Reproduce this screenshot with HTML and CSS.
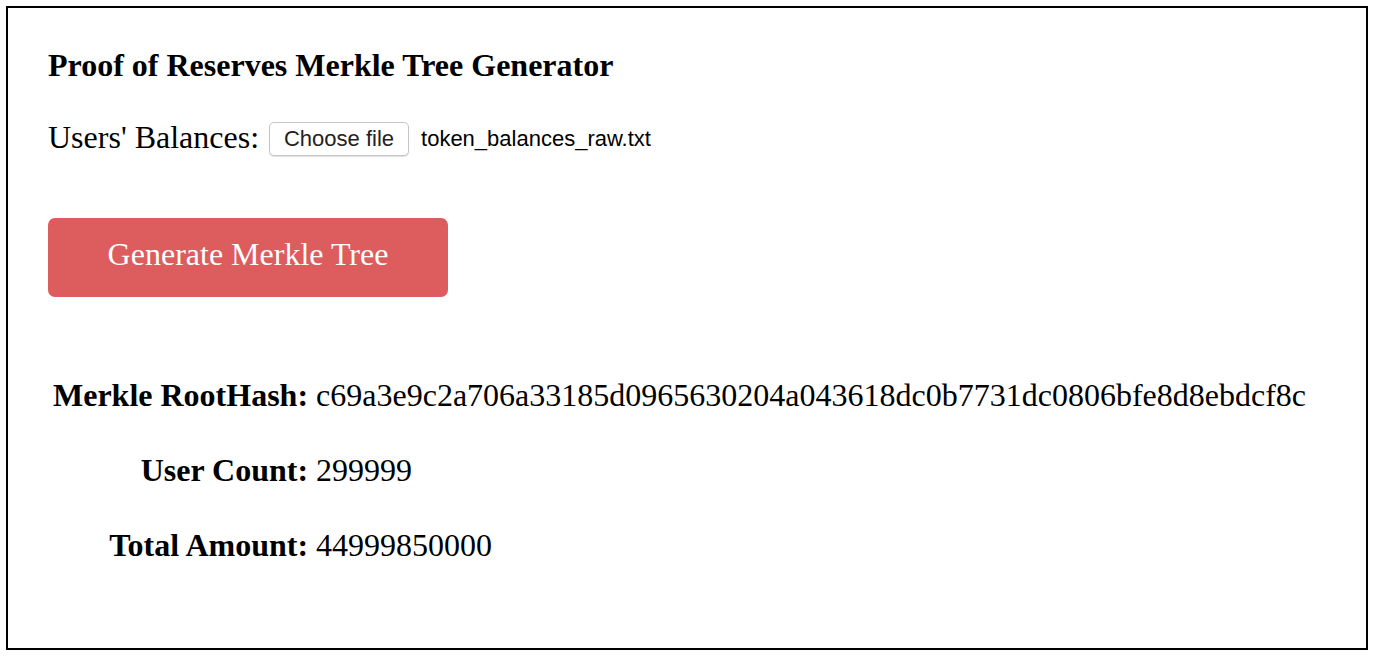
FILE: index.html
```html
<!DOCTYPE html>
<html>
<head>
<meta charset="utf-8">
<link rel="stylesheet" href="styles.css">
</head>
<body>
<div class="frame">
  <h3 class="title">Proof of Reserves Merkle Tree Generator</h3>
  <div class="upload">
    <span class="upload-label">Users' Balances:</span>
    <button class="file-btn" type="button">Choose file</button>
    <span class="file-name">token_balances_raw.txt</span>
  </div>
  <button class="generate" type="button">Generate Merkle Tree</button>
  <table class="results">
    <tr><th>Merkle RootHash:</th><td>c69a3e9c2a706a33185d0965630204a043618dc0b7731dc0806bfe8d8ebdcf8c</td></tr>
    <tr><th>User Count:</th><td>299999</td></tr>
    <tr><th>Total Amount:</th><td>44999850000</td></tr>
  </table>
</div>
</body>
</html>
```

FILE: styles.css
```css
html, body {
  margin: 0;
  padding: 0;
  background: #fff;
}
body {
  padding: 6px;
  font-family: "Liberation Serif", "Times New Roman", serif;
  color: #000;
}
.frame {
  border: 2px solid #000;
  box-sizing: border-box;
  height: 644px;
  padding: 39px 40px 0 40px;
}
.title {
  margin: 0;
  font-size: 32px;
  font-weight: bold;
  line-height: 37px;
}
.upload {
  display: flex;
  align-items: center;
  margin-top: 35px;
  height: 37px;
}
.upload-label {
  font-size: 32px;
  line-height: 37px;
}
.file-btn {
  align-self: flex-start;
  margin-top: 3px;
  margin-left: 10px;
  height: 34px;
  width: 140px;
  border: 1px solid #c6c6c6;
  border-radius: 5px;
  background: #fff;
  box-shadow: 0 1px 1px rgba(0,0,0,0.12);
  font-family: "Liberation Sans", Arial, sans-serif;
  font-size: 22px;
  color: #222;
  padding: 0;
}
.file-name {
  margin-left: 12px;
  margin-top: 3px;
  font-family: "Liberation Sans", Arial, sans-serif;
  font-size: 22px;
}
.generate {
  display: block;
  margin-top: 62px;
  width: 400px;
  height: 79px;
  border: none;
  border-radius: 7px;
  background: #dd5c5e;
  color: #fff;
  font-family: "Liberation Serif", "Times New Roman", serif;
  font-size: 32px;
  line-height: 37px;
  padding: 0 0 6px 0;
}
.results {
  margin-top: 61px;
  border-collapse: separate;
  border-spacing: 5px 0;
  font-size: 32px;
  line-height: 37px;
}
.results th {
  text-align: right;
  font-weight: bold;
  padding: 19px 0;
  white-space: nowrap;
}
.results td {
  text-align: left;
  padding: 19px 0 19px 3px;
  white-space: nowrap;
}
```
